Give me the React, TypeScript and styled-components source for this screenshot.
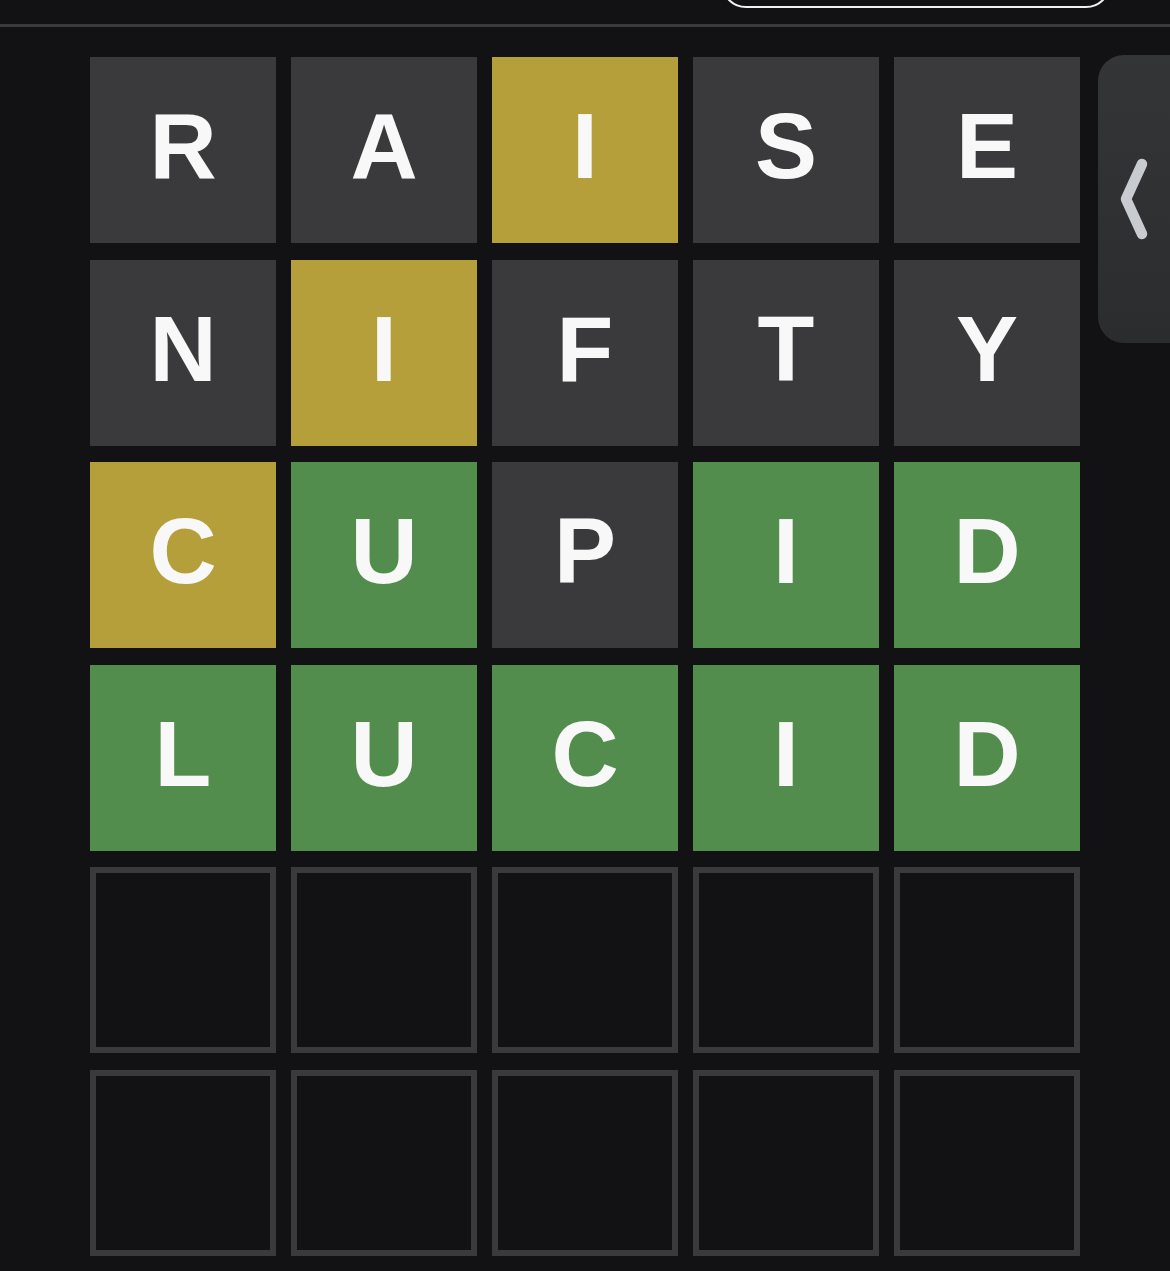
import React from "react";
import styled, { createGlobalStyle } from "styled-components";

const Global = createGlobalStyle`
  html, body { margin: 0; padding: 0; background: #121214; }
  * { box-sizing: border-box; }
`;

type State = "absent" | "present" | "correct" | "empty";

const COLORS: Record<State, string> = {
  absent: "#3a3a3c",
  present: "#b59f3b",
  correct: "#538d4e",
  empty: "transparent",
};

const Page = styled.div`
  width: 1170px;
  height: 1271px;
  background: #121214;
  overflow: hidden;
  font-family: "Liberation Sans", Arial, sans-serif;
`;

const Header = styled.header`
  height: 27px;
  border-bottom: 3px solid #3a3a3c;
  display: flex;
  align-items: flex-start;
  padding-left: 721px;
  overflow: hidden;
`;

const Pill = styled.div`
  width: 390px;
  height: 50px;
  margin-top: -42px;
  border: 2.5px solid #f2f2f2;
  border-radius: 28px;
`;

const Main = styled.main`
  display: flex;
  align-items: flex-start;
  padding-top: 30px;
  padding-left: 90px;
`;

const Board = styled.div`
  display: grid;
  grid-template-columns: repeat(5, 186px);
  grid-auto-rows: 186px;
  column-gap: 15px;
  row-gap: 16.6px;
`;

const Tile = styled.div<{ $state: State }>`
  display: flex;
  align-items: center;
  justify-content: center;
  background: ${(p) => COLORS[p.$state]};
  border: ${(p) => (p.$state === "empty" ? "6px solid #3a3a3c" : "none")};
  color: #f8f8f8;
  font-family: "Liberation Sans", Arial, sans-serif;
  font-weight: 700;
  font-size: 93px;
  line-height: 1;
  padding-bottom: 7px;
`;

const Tab = styled.div`
  margin-left: 18px;
  margin-top: -2px;
  width: 100px;
  height: 288px;
  flex-shrink: 0;
  border-radius: 26px 0 0 26px;
  background: linear-gradient(180deg, #343537 0%, #2e3031 60%, #2a2c2d 100%);
  display: flex;
  align-items: center;
  padding-left: 20px;
`;

const rows: { word: string; states: State[] }[] = [
  { word: "RAISE", states: ["absent", "absent", "present", "absent", "absent"] },
  { word: "NIFTY", states: ["absent", "present", "absent", "absent", "absent"] },
  { word: "CUPID", states: ["present", "correct", "absent", "correct", "correct"] },
  { word: "LUCID", states: ["correct", "correct", "correct", "correct", "correct"] },
  { word: "     ", states: ["empty", "empty", "empty", "empty", "empty"] },
  { word: "     ", states: ["empty", "empty", "empty", "empty", "empty"] },
];

export default function App() {
  return (
    <Page>
      <Global />
      <Header>
        <Pill />
      </Header>
      <Main>
        <Board>
          {rows.flatMap((r, ri) =>
            r.states.map((s, ci) => (
              <Tile key={`${ri}-${ci}`} $state={s}>
                {r.word[ci].trim()}
              </Tile>
            ))
          )}
        </Board>
        <Tab>
          <svg width="34" height="90" viewBox="0 0 34 90">
            <polyline
              points="24,10 8,45 24,80"
              fill="none"
              stroke="#c8cbd0"
              strokeWidth="10.5"
              strokeLinecap="round"
              strokeLinejoin="round"
            />
          </svg>
        </Tab>
      </Main>
    </Page>
  );
}
